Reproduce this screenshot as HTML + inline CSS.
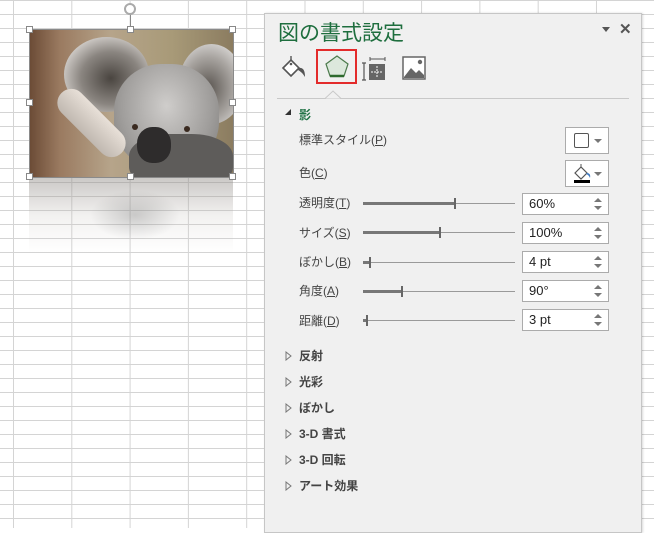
<!DOCTYPE html>
<html><head><meta charset="utf-8"><style>
*{margin:0;padding:0;box-sizing:border-box}
body{width:654px;height:528px;overflow:hidden;background:#fff;position:relative;font-family:"Liberation Sans","Noto Sans CJK JP",sans-serif;font-size:12px;color:#444}
.a{position:absolute}
.grid{position:absolute;left:0;top:0;width:654px;height:528px;
background-image:linear-gradient(to right,#d4d4d4 1px,transparent 1px),linear-gradient(to bottom,#d4d4d4 1px,transparent 1px);
background-size:58.3px 14px;background-position:13px 0,0 0}
.panel{position:absolute;left:264px;top:13px;width:378px;height:520px;background:#f0f0f0;border:1px solid #c6c6c6;box-shadow:1px 0 2px rgba(0,0,0,.15)}
.lbl{position:absolute;left:299px;font-size:12px;color:#444;line-height:14px}
.u{text-decoration:underline}
.track{position:absolute;left:363px;width:152px;height:1px;background:#9a9a9a}
.fill{position:absolute;left:0;top:-1px;height:3px;background:#777}
.thumb{position:absolute;top:-5px;width:2px;height:11px;background:#666}
.inp{position:absolute;left:522px;width:87px;height:22px;background:#fff;border:1px solid #ababab;font-size:13px;color:#222;padding-left:6px;line-height:20px}
.inp:after{content:"";position:absolute;right:6px;top:4px;border:4px solid transparent;border-bottom:4px solid #777;border-top:0}
.inp:before{content:"";position:absolute;right:6px;top:12px;border:4px solid transparent;border-top:4px solid #777;border-bottom:0}
.btn{position:absolute;left:565px;width:44px;height:27px;background:#fff;border:1px solid #ababab}
.dd{position:absolute;right:6px;top:11px;border:4px solid transparent;border-top:4px solid #777;border-bottom:0}
.sec{position:absolute;left:299px;font-weight:bold;font-size:12px;color:#444;line-height:14px}
.trio{position:absolute;left:285px;width:7px;height:10px}
.h{position:absolute;width:7px;height:7px;background:#fff;border:1px solid #888}
</style></head><body>
<div class="grid"></div>
<!-- reflection -->
<div class="a" style="left:29px;top:178px;width:204px;height:75px;background:linear-gradient(to bottom,rgba(140,135,130,.45),rgba(190,185,180,.2) 50%,rgba(255,255,255,0));"></div>
<div class="a" style="left:90px;top:190px;width:90px;height:50px;border-radius:50%;background:radial-gradient(ellipse,rgba(110,110,110,.3),rgba(255,255,255,0) 70%)"></div>
<!-- image -->
<div class="a" style="left:29px;top:29px;width:204px;height:148px;overflow:hidden;background:linear-gradient(90deg,#6a4a35 0%,#9a7a60 15%,#b6a48a 40%,#a89a78 70%,#8b7c60 100%)">
 <div class="a" style="left:35px;top:8px;width:85px;height:75px;border-radius:50%;background:radial-gradient(ellipse at 55% 55%,#4a4540,#8a8580 45%,#dcd8d4 80%,rgba(200,200,200,0) 100%)"></div>
 <div class="a" style="left:150px;top:15px;width:65px;height:80px;border-radius:50%;background:radial-gradient(ellipse at 45% 55%,#5a5550,#a8a4a0 50%,#dcdad8 80%,rgba(200,200,200,0) 100%)"></div>
 <div class="a" style="left:85px;top:35px;width:105px;height:105px;border-radius:45%;background:radial-gradient(ellipse at 50% 40%,#cfcdcb,#a09e9c 60%,#7a7876 100%)"></div>
 <div class="a" style="left:100px;top:105px;width:104px;height:55px;border-radius:40%;background:#5e5c5a"></div>
 <div class="a" style="left:20px;top:80px;width:85px;height:28px;transform:rotate(45deg);border-radius:14px;background:linear-gradient(#e8e0d8,#c0b8b0)"></div>
 <div class="a" style="left:108px;top:98px;width:34px;height:36px;border-radius:45%;background:#2e2c2c"></div>
 <div class="a" style="left:103px;top:95px;width:6px;height:6px;border-radius:50%;background:#3a2a20"></div>
 <div class="a" style="left:155px;top:97px;width:6px;height:6px;border-radius:50%;background:#3a2a20"></div>
</div>
<div class="a" style="left:29px;top:29px;width:205px;height:149px;border:1px solid #8a8a8a"></div>
<div class="a" style="left:130px;top:13px;width:1px;height:16px;background:#888"></div>
<div class="a" style="left:124px;top:3px;width:12px;height:12px;border:2px solid #aaa;border-radius:50%;background:#fff"></div>
<div class="h" style="left:26px;top:26px"></div><div class="h" style="left:127px;top:26px"></div><div class="h" style="left:229px;top:26px"></div>
<div class="h" style="left:26px;top:99px"></div><div class="h" style="left:229px;top:99px"></div>
<div class="h" style="left:26px;top:173px"></div><div class="h" style="left:127px;top:173px"></div><div class="h" style="left:229px;top:173px"></div>

<div class="panel"></div>
<div class="a" style="left:278px;top:20px;font-size:21px;color:#1e6e3e;line-height:27px">図の書式設定</div>
<div class="a" style="left:602px;top:27px;border:4px solid transparent;border-top:5px solid #555;border-bottom:0"></div>
<div class="a" style="left:619px;top:20px;font-size:15px;font-weight:bold;color:#555">✕</div>

<svg class="a" style="left:280px;top:55px" width="28" height="28" viewBox="0 0 28 28">
<path d="M3 13 L11 5 L19 13 L11 21 Z" fill="#fff" stroke="#555" stroke-width="1.6"/>
<path d="M11 5 L11 1" stroke="#555" stroke-width="1.4"/><circle cx="11" cy="9" r="1.3" fill="#555"/>
<path d="M19 13 Q25 12 25 22 Q22 17 18 15 Z" fill="#555"/></svg>
<div class="a" style="left:316px;top:49px;width:41px;height:35px;border:2px solid #e32b2b"></div>
<svg class="a" style="left:324px;top:54px" width="26" height="26" viewBox="0 0 26 26">
<path d="M13 2 L24 10 L20 22 L6 22 L2 10 Z" fill="#dce8dc" stroke="#4c7a4c" stroke-width="1.2"/>
<path d="M6 22 H20" stroke="#2d6a2d" stroke-width="2.5"/></svg>
<svg class="a" style="left:362px;top:56px" width="26" height="26" viewBox="0 0 26 26">
<path d="M2 7 V24 M0 7 H4 M0 24 H4" stroke="#555" stroke-width="1.2"/>
<path d="M8 3 H23 M8 1 V5 M23 1 V5" stroke="#555" stroke-width="1"/>
<rect x="7" y="8" width="16" height="16" fill="#666"/>
<path d="M15 10 V22 M9 16 H21" stroke="#fff" stroke-width="1" stroke-dasharray="2 1"/></svg>
<svg class="a" style="left:402px;top:56px" width="25" height="25" viewBox="0 0 25 25">
<rect x="1" y="1" width="22" height="22" fill="#fff" stroke="#666" stroke-width="1.5"/>
<path d="M2 21 L9 12 L14 17 L17 14 L22 19 V22 H2 Z" fill="#666"/><circle cx="18" cy="6" r="2.2" fill="#666"/></svg>
<div class="a" style="left:277px;top:98px;width:352px;height:1px;background:#c8c8c8"></div>
<svg class="a" style="left:325px;top:90px" width="18" height="10"><path d="M0 8.5 L8 1 L16 8.5" fill="#f0f0f0" stroke="#c8c8c8"/></svg>

<div class="a" style="left:285px;top:109px;border-left:6px solid transparent;border-bottom:6px solid #333"></div>
<div class="a" style="left:299px;top:106px;color:#217346;font-weight:bold;font-size:12px">影</div>

<div class="lbl" style="top:133px">標準スタイル(<span class="u">P</span>)</div>
<div class="btn" style="top:127px"><div class="a" style="left:8px;top:5px;width:15px;height:15px;border:1.5px solid #555;border-radius:2px"></div><div class="dd"></div></div>
<div class="lbl" style="top:166px">色(<span class="u">C</span>)</div>
<div class="btn" style="top:160px">
<svg class="a" style="left:6px;top:3px" width="20" height="16" viewBox="0 0 20 16"><path d="M3 9 L9 3 L15 9 L9 15 Z" fill="#fff" stroke="#555" stroke-width="1.2"/><path d="M9 3 V0" stroke="#555"/><path d="M15 9 Q19 9 18 14 Q17 11 14 10Z" fill="#3b78c2"/></svg>
<div class="a" style="left:8px;top:19px;width:16px;height:3px;background:#000"></div><div class="dd"></div></div>

<div class="lbl" style="top:196px">透明度(<span class="u">T</span>)</div>
<div class="track" style="top:203px"><div class="fill" style="width:92px"></div><div class="thumb" style="left:91px"></div></div>
<div class="inp" style="top:193px">60%</div>
<div class="lbl" style="top:226px">サイズ(<span class="u">S</span>)</div>
<div class="track" style="top:232px"><div class="fill" style="width:77px"></div><div class="thumb" style="left:76px"></div></div>
<div class="inp" style="top:222px">100%</div>
<div class="lbl" style="top:255px">ぼかし(<span class="u">B</span>)</div>
<div class="track" style="top:262px"><div class="fill" style="width:7px"></div><div class="thumb" style="left:6px"></div></div>
<div class="inp" style="top:251px">4 pt</div>
<div class="lbl" style="top:284px">角度(<span class="u">A</span>)</div>
<div class="track" style="top:291px"><div class="fill" style="width:39px"></div><div class="thumb" style="left:38px"></div></div>
<div class="inp" style="top:280px">90°</div>
<div class="lbl" style="top:314px">距離(<span class="u">D</span>)</div>
<div class="track" style="top:320px"><div class="fill" style="width:4px"></div><div class="thumb" style="left:3px"></div></div>
<div class="inp" style="top:309px">3 pt</div>

<svg class="trio" style="top:351px"><path d="M1 1 L6 5 L1 9 Z" fill="none" stroke="#777"/></svg><div class="sec" style="top:349px">反射</div>
<svg class="trio" style="top:377px"><path d="M1 1 L6 5 L1 9 Z" fill="none" stroke="#777"/></svg><div class="sec" style="top:375px">光彩</div>
<svg class="trio" style="top:403px"><path d="M1 1 L6 5 L1 9 Z" fill="none" stroke="#777"/></svg><div class="sec" style="top:401px">ぼかし</div>
<svg class="trio" style="top:429px"><path d="M1 1 L6 5 L1 9 Z" fill="none" stroke="#777"/></svg><div class="sec" style="top:427px">3-D 書式</div>
<svg class="trio" style="top:455px"><path d="M1 1 L6 5 L1 9 Z" fill="none" stroke="#777"/></svg><div class="sec" style="top:453px">3-D 回転</div>
<svg class="trio" style="top:481px"><path d="M1 1 L6 5 L1 9 Z" fill="none" stroke="#777"/></svg><div class="sec" style="top:479px">アート効果</div>
</body></html>
